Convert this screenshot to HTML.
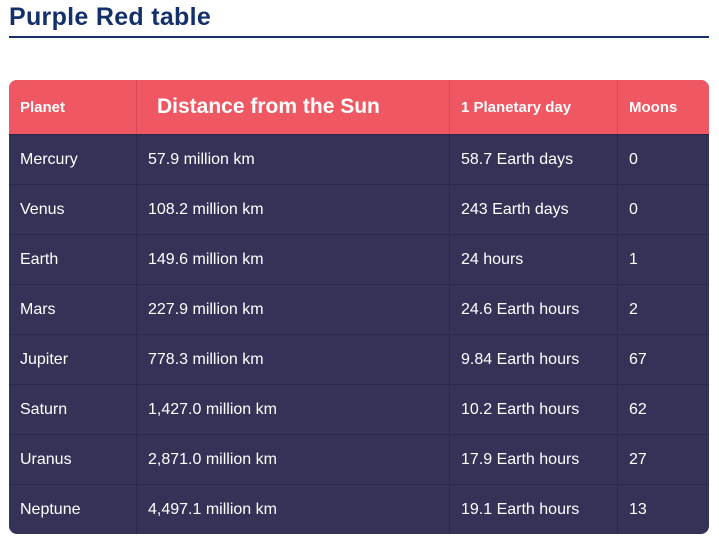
<!DOCTYPE html><html><head><style>
body{margin:0;background:#fff;font-family:"Liberation Sans",sans-serif;}
h1{position:absolute;left:9px;top:3px;margin:0;font-size:25px;font-weight:bold;color:#14306b;letter-spacing:0.3px}
.line{position:absolute;left:9px;top:36px;width:700px;height:2px;background:#14306b}
table{position:absolute;left:9px;top:80px;width:700px;border-collapse:separate;border-spacing:0;border-radius:8px;overflow:hidden;background:#353257;color:#fff;font-size:16px;table-layout:fixed}
th{background:#ef5862;height:54px;text-align:left;padding:0 0 0 11px;font-size:15px;font-weight:bold;border-right:1px solid #d94a55}
th.big{font-size:21px;padding-left:20px}
td{height:49px;padding:0 0 0 11px;border-top:1px solid #2b2848;border-right:1px solid #2b2848}
tr>*:last-child{border-right:none}
</style></head><body>
<h1>Purple Red table</h1><div class="line"></div>
<table>
<colgroup><col style="width:128px"><col style="width:313px"><col style="width:168px"><col></colgroup>
<tr><th>Planet</th><th class="big">Distance from the Sun</th><th>1 Planetary day</th><th>Moons</th></tr>
<tr><td>Mercury</td><td>57.9 million km</td><td>58.7 Earth days</td><td>0</td></tr>
<tr><td>Venus</td><td>108.2 million km</td><td>243 Earth days</td><td>0</td></tr>
<tr><td>Earth</td><td>149.6 million km</td><td>24 hours</td><td>1</td></tr>
<tr><td>Mars</td><td>227.9 million km</td><td>24.6 Earth hours</td><td>2</td></tr>
<tr><td>Jupiter</td><td>778.3 million km</td><td>9.84 Earth hours</td><td>67</td></tr>
<tr><td>Saturn</td><td>1,427.0 million km</td><td>10.2 Earth hours</td><td>62</td></tr>
<tr><td>Uranus</td><td>2,871.0 million km</td><td>17.9 Earth hours</td><td>27</td></tr>
<tr><td>Neptune</td><td>4,497.1 million km</td><td>19.1 Earth hours</td><td>13</td></tr>
</table>
</body></html>
